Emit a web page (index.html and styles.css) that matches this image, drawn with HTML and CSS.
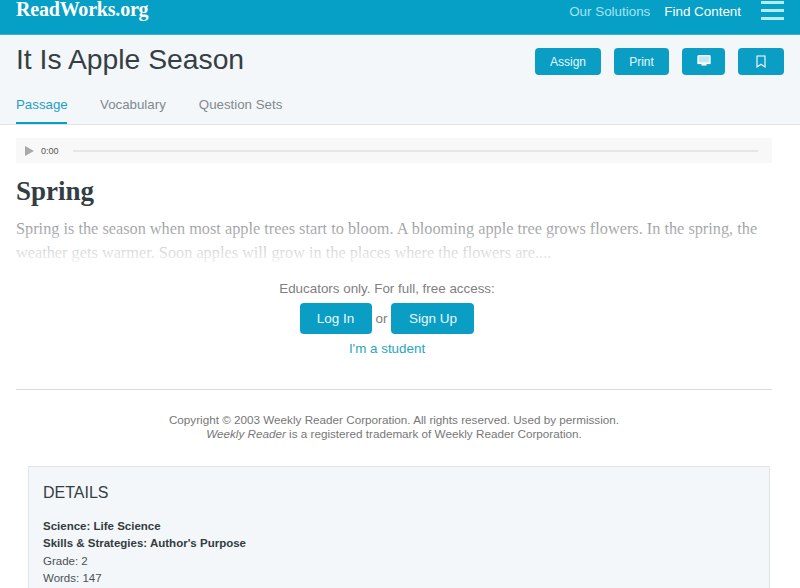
FILE: index.html
```html
<!DOCTYPE html>
<html lang="en">
<head>
    <meta charset="UTF-8">
    <meta name="viewport" content="width=device-width, initial-scale=1.0">
    <title>It Is Apple Season</title>
    <link rel="stylesheet" href="styles.css">
</head>
<body>
    <header class="topbar">
        <a class="logo">ReadWorks<span class="logo-reg">.</span>org</a>
        <nav class="topnav">
            <a class="topnav-dim">Our Solutions</a>
            <a>Find Content</a>
            <div class="burger"><span></span><span></span><span></span></div>
        </nav>
    </header>
    <section class="titlebar">
        <div class="title-row">
            <h1>It Is Apple Season</h1>
            <div class="actions">
                <button class="action action-assign">Assign</button>
                <button class="action action-print">Print</button>
                <button class="action action-screen">
                    <svg class="icon-screen" width="14" height="11" viewBox="0 0 14 11"><rect x="1" y="0.7" width="12" height="7.6" rx="0.8" fill="#bfe8f2" stroke="#fff" stroke-width="1.3"/><rect x="0.5" y="7.5" width="13" height="1.6" fill="#fff"/><rect x="4.5" y="9" width="5" height="1.6" fill="#fff"/></svg>
                </button>
                <button class="action action-mark">
                    <svg width="10" height="13" viewBox="0 0 10 13"><path d="M1 1h8v11L5 9.2 1 12z" fill="none" stroke="#fff" stroke-width="1.1"/></svg>
                </button>
            </div>
        </div>
        <div class="tabs">
            <a class="tab tab-active">Passage</a>
            <a class="tab">Vocabulary</a>
            <a class="tab">Question Sets</a>
        </div>
    </section>
    <main class="content">
        <div class="player">
            <span class="play"></span>
            <span class="time">0:00</span>
            <span class="track"></span>
        </div>
        <h2>Spring</h2>
        <div class="passage">
            <p>Spring is the season when most apple trees start to bloom. A blooming apple tree grows flowers. In the spring, the weather gets warmer. Soon apples will grow in the places where the flowers are....</p>
            <div class="fade"></div>
        </div>
        <div class="access">
            <p>Educators only. For full, free access:</p>
            <div class="access-btns">
                <button class="big-btn btn-login">Log In</button>
                <span>or</span>
                <button class="big-btn btn-signup">Sign Up</button>
            </div>
            <a class="student">I'm a student</a>
        </div>
        <div class="copyright">
            Copyright © 2003 Weekly Reader Corporation. All rights reserved. Used by permission.<br>
            <em>Weekly Reader</em> is a registered trademark of Weekly Reader Corporation.
        </div>
        <section class="details">
            <h3>DETAILS</h3>
            <div><strong>Science: Life Science</strong></div>
            <div><strong>Skills &amp; Strategies: Author's Purpose</strong></div>
            <div>Grade: 2</div>
            <div>Words: 147</div>
        </section>
    </main>
</body>
</html>
```

FILE: styles.css
```css
html, body {
    height: 588px;
    overflow: hidden;
}
body {
    font-family: "Liberation Sans", Arial, sans-serif;
    margin: 0;
    padding: 0;
    background-color: #fff;
    color: #3a4248;
}
.topbar {
    height: 34px;
    background-color: #069fc6;
    border-bottom: 1px solid #35b3d2;
    display: flex;
    justify-content: space-between;
    padding: 0 16px;
    overflow: hidden;
}
.logo {
    font-family: "Liberation Serif", serif;
    font-weight: bold;
    font-size: 20px;
    letter-spacing: -0.2px;
    line-height: 19px;
    color: #fff;
}
.logo-reg {
    color: #d5f1f8;
}
.topnav {
    display: flex;
    align-items: flex-start;
    font-size: 13.4px;
    line-height: 23px;
    color: #fff;
}
.topnav-dim {
    color: #a5e4f2;
    margin-right: 14px;
}
.burger {
    margin-left: 20px;
    margin-top: 1px;
    width: 23px;
}
.burger span {
    display: block;
    height: 3px;
    background-color: #b4ecf6;
    margin-bottom: 5px;
}
.titlebar {
    background-color: #f4f7f9;
    border-bottom: 1px solid #dfe3e5;
    padding: 0 16px;
    height: 89px;
}
.title-row {
    display: flex;
    justify-content: space-between;
    align-items: flex-start;
    height: 60px;
}
h1 {
    font-weight: normal;
    font-size: 28.3px;
    line-height: 32px;
    margin: 8px 0 0;
    color: #363e44;
}
.actions {
    display: flex;
    margin: 13px 0 0;
}
.action {
    height: 27px;
    border: none;
    border-radius: 4px;
    background-color: #0a9ec4;
    color: #e6f7fb;
    font-family: inherit;
    font-size: 12px;
    padding: 0;
    display: flex;
    align-items: center;
    justify-content: center;
}
.action-assign { width: 66px; margin-right: 13px; }
.action-print { width: 55px; margin-right: 13px; }
.action-screen { width: 43px; margin-right: 13px; }
.action-mark { width: 46px; }
.icon-screen {
    margin-bottom: 2px;
}
.tabs {
    display: flex;
    gap: 33px;
}
.tab {
    font-size: 13.3px;
    line-height: 20px;
    height: 27px;
    color: #80898f;
    box-sizing: border-box;
    padding-bottom: 7px;
}
.tab-active {
    color: #1c9fc2;
    border-bottom: 2px solid #069fc6;
    height: 29px;
    width: 51px;
}
.content {
    padding: 0 28px 0 16px;
}
.player {
    margin-top: 13px;
    height: 25px;
    width: 756px;
    background-color: #f8f8f8;
    display: flex;
    align-items: center;
}
.play {
    width: 0;
    height: 0;
    margin-left: 9px;
    border-left: 9px solid #a9a9a9;
    border-top: 5.5px solid transparent;
    border-bottom: 5.5px solid transparent;
}
.time {
    font-size: 9px;
    color: #555;
    margin-left: 7px;
}
.track {
    height: 2px;
    width: 685px;
    margin-left: 14px;
    background-color: #e6e6e6;
}
h2 {
    font-family: "Liberation Serif", serif;
    font-weight: bold;
    font-size: 27px;
    line-height: 30px;
    margin: 13px 0 0;
    color: #333d44;
}
.passage {
    position: relative;
    width: 756px;
    margin-top: 11px;
    height: 48px;
    overflow: hidden;
}
.passage p {
    font-family: "Liberation Serif", serif;
    font-size: 16.3px;
    line-height: 24px;
    margin: 0;
    color: #7c8085;
}
.fade {
    position: absolute;
    left: 0;
    right: 0;
    top: 0;
    bottom: 0;
    background: linear-gradient(to bottom, rgba(255,255,255,0.1), rgba(255,255,255,0.95));
}
.access {
    width: 742px;
    text-align: center;
    font-size: 13.4px;
    color: #808080;
}
.access p {
    margin: 0;
    padding-top: 16px;
    line-height: 16px;
}
.access-btns {
    display: flex;
    justify-content: center;
    align-items: center;
    gap: 4px;
    margin-top: 6px;
}
.big-btn {
    height: 31px;
    border: none;
    border-radius: 4px;
    background-color: #0a9ec4;
    color: #eaf8fb;
    font-family: inherit;
    font-size: 13.5px;
    padding: 0;
}
.btn-login { width: 72px; }
.btn-signup { width: 83px; }
.student {
    display: block;
    margin-top: 7px;
    line-height: 16px;
    color: #2aa5bf;
}
.copyright {
    width: 756px;
    margin-top: 32px;
    padding-top: 23px;
    border-top: 1px solid #dcdcdc;
    text-align: center;
    font-size: 11.7px;
    line-height: 14px;
    color: #777;
}
.details {
    margin: 25px 0 0 12px;
    width: 742px;
    height: 140px;
    box-sizing: border-box;
    background-color: #f4f7f9;
    border: 1px solid #e0e4e6;
    padding: 16px 14px;
    font-size: 11.5px;
    line-height: 17.4px;
    color: #4a5157;
}
.details h3 {
    font-weight: normal;
    font-size: 16px;
    line-height: 20px;
    margin: 0 0 15px;
    color: #363e44;
}
.details strong {
    color: #333b41;
}
```
